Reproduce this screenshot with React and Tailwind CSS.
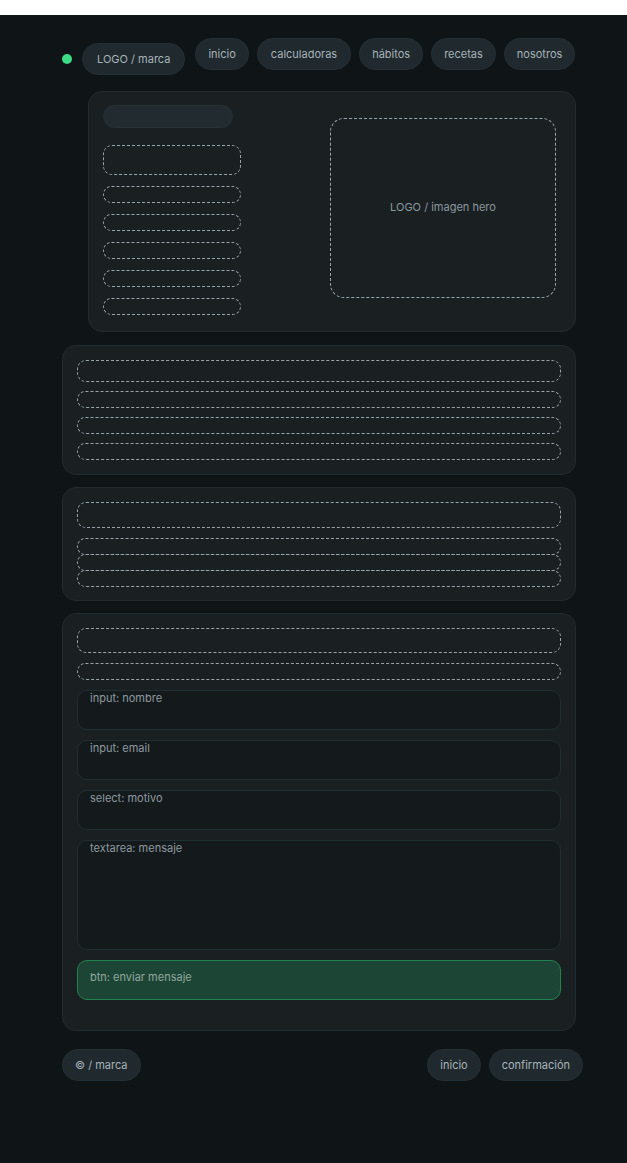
import React from 'react';

const font = { fontFamily: 'Inter, "Noto Sans", sans-serif' };

const Pill = ({ children, className = '' }) => (
    <span className={`inline-flex items-center h-[32px] px-[12px] rounded-full bg-[#1f292e] border border-[#243036] text-[11px] text-[#a8b3b8] whitespace-nowrap ${className}`}>
        {children}
    </span>
);

const Dashed = ({ className = '' }) => (
    <div className={`border border-dashed border-[#9aa5ab] rounded-[9px] ${className}`} />
);

const Field = ({ label, className = 'h-[40px]' }) => (
    <div className={`rounded-[10px] border border-[#232e33] bg-[#14191c] px-[12px] pt-0 leading-[15px] text-[11px] text-[#8d999f] ${className}`}>
        {label}
    </div>
);

const App = () => {
    return (
        <div className="w-[627px] min-h-[1163px] bg-white" style={font}>
            <div className="mt-[15px] bg-[#0f1417] min-h-[1148px] pl-[62px] pt-[23px]">
                {/* Header */}
                <header className="flex items-start">
                    <div className="flex items-center mt-[5px]">
                        <span className="w-[10px] h-[10px] rounded-full bg-[#3ddc84]" />
                        <Pill className="ml-[10px] px-[14px] text-[11.5px]">LOGO / marca</Pill>
                    </div>
                    <nav className="flex gap-[8px] ml-[10px]">
                        <Pill>inicio</Pill>
                        <Pill className="px-[13px]">calculadoras</Pill>
                        <Pill>hábitos</Pill>
                        <Pill>recetas</Pill>
                        <Pill>nosotros</Pill>
                    </nav>
                </header>

                <main className="w-[514px]">
                    {/* Hero */}
                    <section className="ml-[26px] mt-[16px] h-[241px] rounded-[14px] border border-[#222c30] bg-[#1a1f22] pl-[14px] pr-[19px] flex items-center justify-between">
                        <div className="w-[138px] -mt-[4px] flex flex-col">
                            <div className="w-[130px] h-[23px] rounded-full bg-[#222b30] border border-[#263238]" />
                            <Dashed className="h-[30px] mt-[17px]" />
                            <div className="flex flex-col gap-[11px] mt-[11px]">
                                <Dashed className="h-[17px]" />
                                <Dashed className="h-[17px]" />
                                <Dashed className="h-[17px]" />
                                <Dashed className="h-[17px]" />
                                <Dashed className="h-[17px]" />
                            </div>
                        </div>
                        <div className="w-[226px] h-[180px] -mt-[8px] rounded-[14px] border border-dashed border-[#9aa5ab] flex items-center justify-center text-[11px] text-[#8a989f]">
                            LOGO / imagen hero
                        </div>
                    </section>

                    {/* Section 2 */}
                    <section className="mt-[13px] rounded-[14px] border border-[#222c30] bg-[#1a1f22] p-[14px] flex flex-col gap-[9px]">
                        <Dashed className="h-[22px]" />
                        <Dashed className="h-[17px]" />
                        <Dashed className="h-[17px]" />
                        <Dashed className="h-[17px]" />
                    </section>

                    {/* Section 3 */}
                    <section className="mt-[12px] rounded-[14px] border border-[#222c30] bg-[#1a1f22] px-[14px] pt-[14px] pb-[13px] flex flex-col">
                        <Dashed className="h-[26px]" />
                        <Dashed className="h-[17px] mt-[10px]" />
                        <Dashed className="h-[17px] -mt-[1px]" />
                        <Dashed className="h-[17px] -mt-[1px]" />
                    </section>

                    {/* Contact form */}
                    <section className="mt-[12px] rounded-[14px] border border-[#222c30] bg-[#1a1f22] px-[14px] pt-[14px] pb-[30px] flex flex-col gap-[10px]">
                        <Dashed className="h-[25px]" />
                        <Dashed className="h-[17px]" />
                        <Field label="input: nombre" />
                        <Field label="input: email" />
                        <Field label="select: motivo" />
                        <Field label="textarea: mensaje" className="h-[110px]" />
                        <div className="h-[40px] rounded-[10px] border border-[#23834f] bg-[#1c4536] px-[12px] pt-[8px] text-[11px] text-[#8fa89d]">
                            btn: enviar mensaje
                        </div>
                    </section>
                </main>

                {/* Footer */}
                <footer className="w-[521px] mt-[18px] flex justify-between">
                    <Pill>© / marca</Pill>
                    <div className="flex gap-[8px]">
                        <Pill>inicio</Pill>
                        <Pill>confirmación</Pill>
                    </div>
                </footer>
            </div>
        </div>
    );
};

export default App;
